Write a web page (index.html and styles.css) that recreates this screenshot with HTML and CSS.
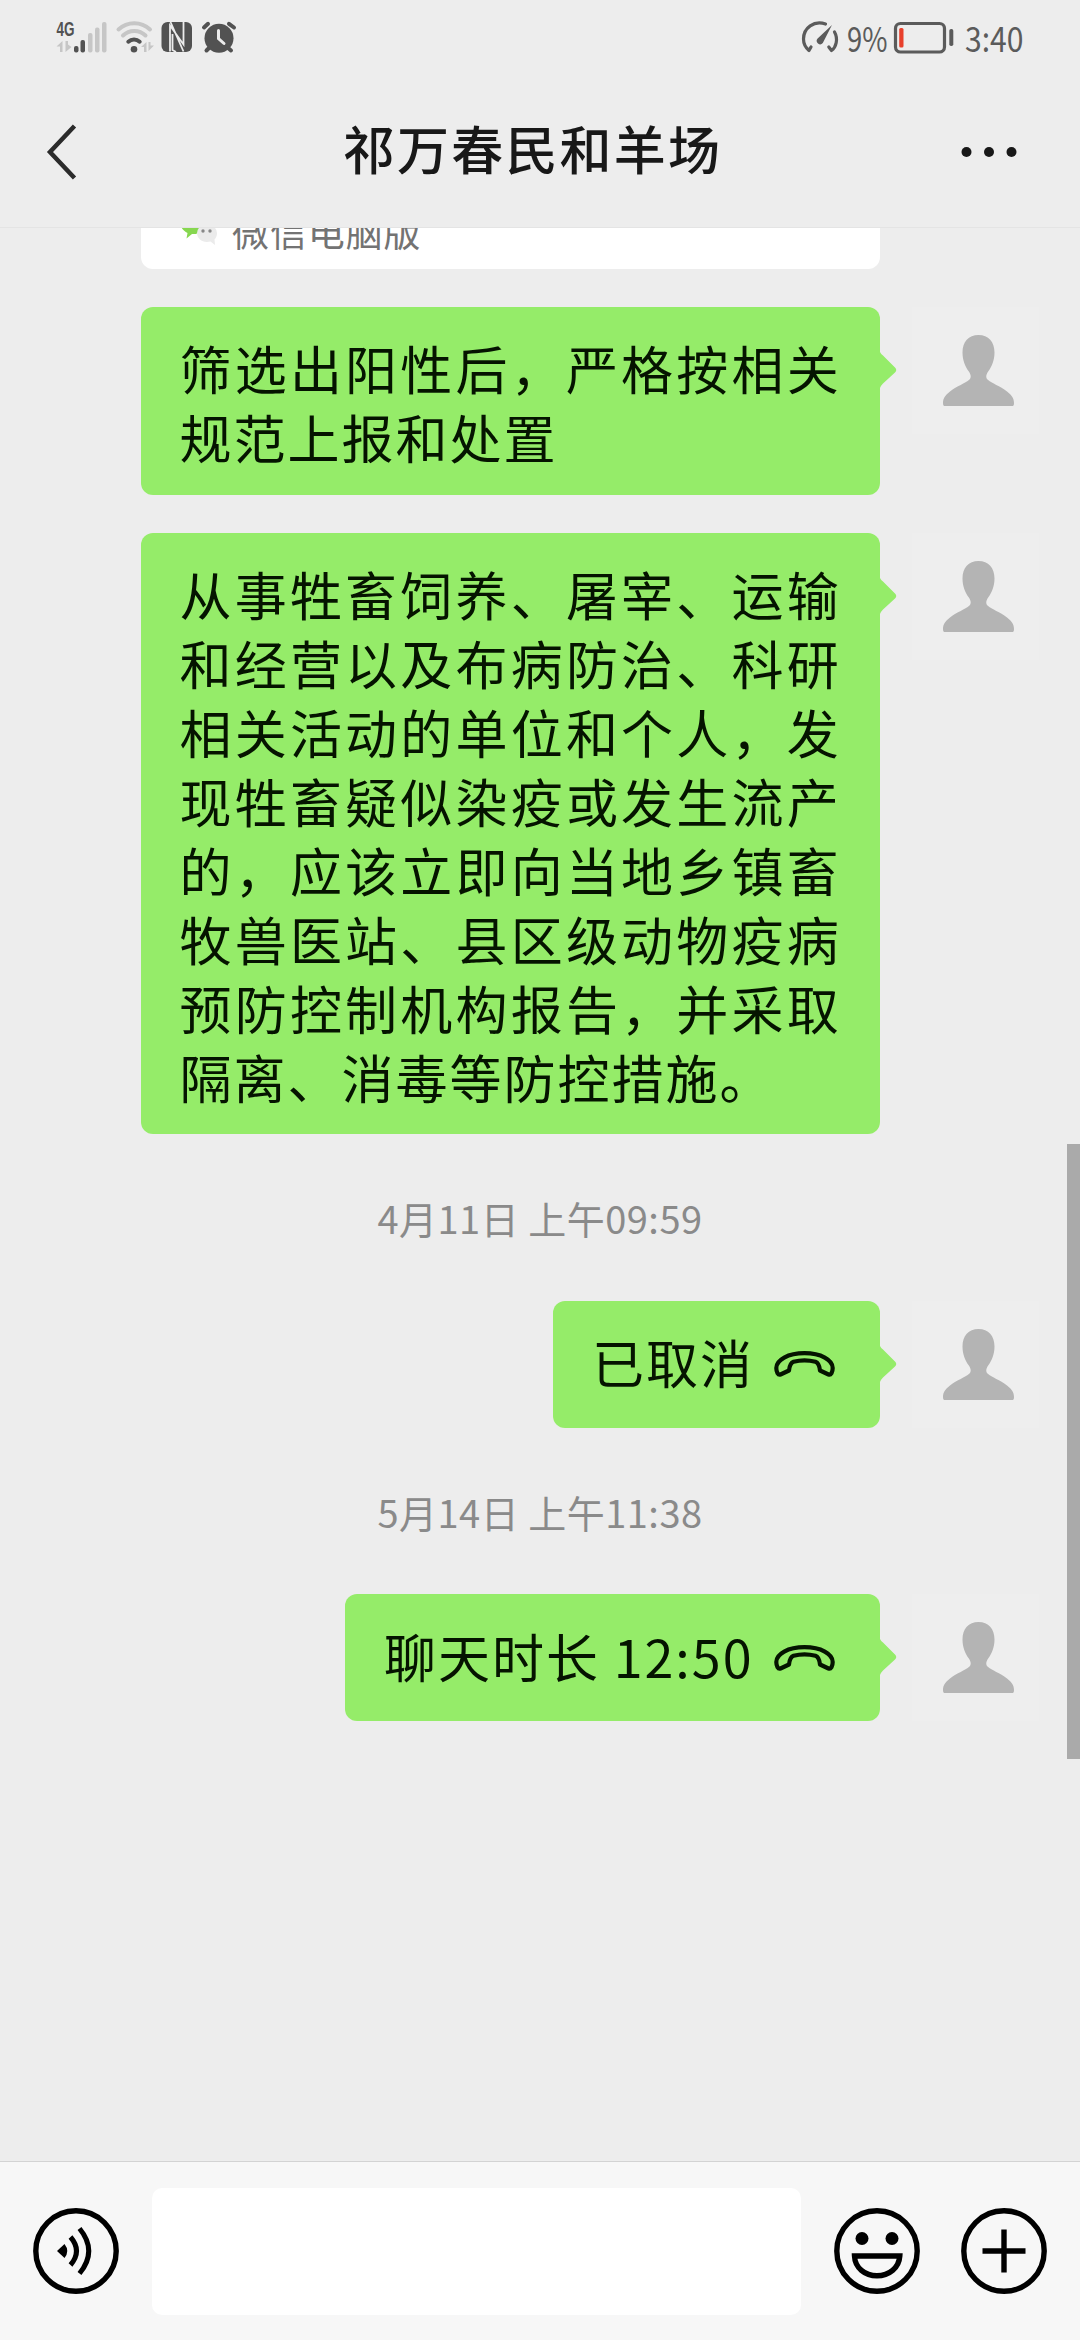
FILE: index.html
```html
<!DOCTYPE html>
<html lang="zh-CN">
<head>
<meta charset="utf-8">
<title>祁万春民和羊场</title>
<link rel="stylesheet" href="styles.css">
</head>
<body>
<svg class="defs" width="0" height="0" aria-hidden="true">
  <symbol id="person" viewBox="0 0 127 127">
    <path fill="#b4b4b4" d="M66.500 28C76.500 28 82.500 35 82.500 45.500C82.500 53.500 79.500 60 76.500 64C74 67.500 73.500 70.500 75.500 72.500C80 76.500 88 79 95 84.500C100 88.500 102 91.500 102 96C102 98.500 101.500 99 99.500 99H33.500C31.500 99 31 98.500 31 96C31 91.500 33 88.500 38 84.500C45 79 53 76.500 57.500 72.500C59.500 70.500 59 67.500 56.500 64C53.500 60 50.500 53.500 50.500 45.500C50.500 35 56.500 28 66.500 28Z"/>
  </symbol>
  <symbol id="call" viewBox="0 0 61 26">
    <path fill="none" stroke="#051400" stroke-width="4.200" stroke-linejoin="round" d="M2.300 17C2.300 9 14 2.200 30.500 2.200S58.700 9 58.700 17C58.700 21 57 24.500 54.500 23.500L46 19.500C45.500 15 43.500 11.500 41.500 10.800C35 9 26 9 19.500 10.800C17.500 11.500 15.500 15 15 19.500L6.500 23.500C4 24.500 2.300 21 2.300 17Z"/>
  </symbol>
  <symbol id="tail" viewBox="0 0 17 36">
    <path fill="#95ec69" d="M0 0Q1 2 3 3.500L15 15.500Q17.500 18 15 20.500L3 31.500Q1 33.500 0 36Z"/>
  </symbol>
</svg>

<header class="top">
  <div class="status">
    <svg width="156" height="40" viewBox="50 16 156 40">
      <text class="net" x="56.500" y="36" textLength="18" lengthAdjust="spacingAndGlyphs">4G</text>
      <g fill="#c6c6c6">
        <rect x="88" y="33" width="4.500" height="19.500" rx="2"/>
        <rect x="95" y="27.500" width="4.500" height="25" rx="2"/>
        <rect x="102" y="22" width="4.500" height="30.500" rx="2"/>
        <path d="M56.500 46.500L62.500 41V52H60V46.500ZM65.500 41H68V44.500L71.500 47L65.500 52ZM141 47L146.500 42V52H144V47ZM148.500 42H150.500V45.500H154L148.500 51Z"/>
      </g>
      <g fill="#525252">
        <rect x="74" y="46" width="4.500" height="6.500" rx="2"/>
        <rect x="80.500" y="40" width="4.500" height="12.500" rx="2"/>
        <circle cx="134" cy="49.200" r="3.300"/>
      </g>
      <g fill="none" stroke-width="4" stroke-linecap="round">
        <path stroke="#c6c6c6" d="M118.500 29.500A23 23 0 0 1 150 29.500M123 35.500A16 16 0 0 1 145.500 35.500"/>
        <path stroke="#525252" d="M128.300 41.700A8.500 8.500 0 0 1 139.700 41.700"/>
      </g>
      <rect x="161.500" y="22" width="30.500" height="30" rx="6" fill="#525252"/>
      <path fill="none" stroke="#ececec" stroke-width="1.800" d="M170 51.500V25.500L183.500 44.500V23M170.500 22L183.500 51.500M172.500 34V50L176 52M183.500 44V22"/>
    </svg>
    <svg class="alarm" width="36" height="34" viewBox="201 20 36 34">
      <g stroke="#525252" stroke-width="4" stroke-linecap="round">
        <path d="M204 27.500L208 23.800M229 23.800L234 27.500M210 47L206.500 50.500M227 47L231 50.500"/>
      </g>
      <circle cx="219" cy="38.300" r="14.500" fill="#525252"/>
      <path d="M218.500 30.500V38.500L224 43.500" fill="none" stroke="#ececec" stroke-width="3" stroke-linecap="round"/>
    </svg>
    <svg class="status-right" width="226" height="60" viewBox="800 6 226 60">
      <g fill="none" stroke="#5b5b5b" stroke-width="3.200" stroke-linecap="round" stroke-linejoin="round">
        <path d="M825.500 24C814 20 803.500 28 803.500 39C803.500 43.500 805.500 47.500 809 50.500L811 47M834.500 32C838.500 39 836 47.500 831.500 50.500L828.800 47"/>
      </g>
      <path fill="#5b5b5b" d="M832 25L822.800 43A3.300 3.300 0 1 1 817.600 38.600Z"/>
      <text class="status-text" x="847" y="51.500" textLength="40.500" lengthAdjust="spacingAndGlyphs">9%</text>
      <rect x="895.500" y="23.500" width="49" height="28.500" rx="5" fill="none" stroke="#5b5b5b" stroke-width="3.200"/>
      <rect x="899.200" y="28" width="4.300" height="19.500" rx="1.500" fill="#e8402c"/>
      <rect x="949.300" y="29" width="4" height="17" rx="1.800" fill="#5b5b5b"/>
      <text class="status-text" x="965" y="51.500" textLength="58.500" lengthAdjust="spacingAndGlyphs">3:40</text>
    </svg>
  </div>
  <nav class="nav">
    <svg width="32" height="58" viewBox="0 0 32 58"><path d="M28.500 3L4 29L28.500 55" fill="none" stroke="#2b2b2b" stroke-width="4.500"/></svg>
    <h1>祁万春民和羊场</h1>
    <svg width="56" height="12" viewBox="0 0 56 12" fill="#181818"><circle cx="5.500" cy="6" r="5"/><circle cx="28" cy="6" r="5"/><circle cx="50.500" cy="6" r="5"/></svg>
  </nav>
</header>

<main class="chat">
  <div class="card">
    <svg width="40" height="36" viewBox="179 210 40 36">
      <path fill="#87d750" d="M180 222A13 11 0 0 1 206 222C206 227 201 231 196 234H192L186.500 238.500L187.500 233C183 230.500 180 227 180 222Z"/>
      <path fill="#ebebeb" d="M197 233A10 8.500 0 0 1 217 233C217 236 216 238 214.500 239.500L215 245L210.500 241.500C203 243.500 197 239 197 233Z"/>
      <circle cx="203" cy="231" r="1.700" fill="#888"/><circle cx="210" cy="231" r="1.700" fill="#888"/>
    </svg>
    <span>微信电脑版</span>
  </div>

  <div class="row">
    <div class="bubble long">
      <div class="line full">筛选出阳性后，严格按相关</div>
      <div class="line">规范上报和处置</div>
      <svg class="tail"><use href="#tail"/></svg>
    </div>
    <svg class="avatar"><use href="#person"/></svg>
  </div>

  <div class="row">
    <div class="bubble long">
      <div class="line full">从事牲畜饲养、屠宰、运输</div>
      <div class="line full">和经营以及布病防治、科研</div>
      <div class="line full">相关活动的单位和个人，发</div>
      <div class="line full">现牲畜疑似染疫或发生流产</div>
      <div class="line full">的，应该立即向当地乡镇畜</div>
      <div class="line full">牧兽医站、县区级动物疫病</div>
      <div class="line full">预防控制机构报告，并采取</div>
      <div class="line">隔离、消毒等防控措施。</div>
      <svg class="tail"><use href="#tail"/></svg>
    </div>
    <svg class="avatar"><use href="#person"/></svg>
  </div>

  <time class="time">4月11日 上午09:59</time>

  <div class="row call-row">
    <div class="bubble call cancelled">
      <span>已取消</span>
      <svg class="call-icon"><use href="#call"/></svg>
      <svg class="tail"><use href="#tail"/></svg>
    </div>
    <svg class="avatar"><use href="#person"/></svg>
  </div>

  <time class="time">5月14日 上午11:38</time>

  <div class="row call-row">
    <div class="bubble call duration">
      <span>聊天时长 12:50</span>
      <svg class="call-icon"><use href="#call"/></svg>
      <svg class="tail"><use href="#tail"/></svg>
    </div>
    <svg class="avatar"><use href="#person"/></svg>
  </div>
  <div class="scrollbar"></div>
</main>

<footer class="composer">
  <svg width="86" height="86" viewBox="-43 -43 86 86">
    <circle r="40.200" fill="none" stroke="#000" stroke-width="5.400"/>
    <path d="M-19 0L-11.500 -7Q-6 0 -11.500 7Z"/>
    <path fill="none" stroke="#000" stroke-width="5" d="M-5.500 -14Q6.500 0 -5.500 14M3.500 -22.500Q22 0 3.500 22.500"/>
  </svg>
  <div class="input"></div>
  <svg width="86" height="86" viewBox="-43 -43 86 86">
    <circle r="40.200" fill="none" stroke="#000" stroke-width="5.400"/>
    <circle cx="-15" cy="-12.500" r="6.500"/><circle cx="15" cy="-12.500" r="6.500"/>
    <path fill="none" stroke="#000" stroke-width="5.400" d="M-22.500 5H22.800C22 17 12 24.800 0 24.800S-22 17 -22.500 5Z"/>
  </svg>
  <svg class="plus" width="86" height="86" viewBox="-43 -43 86 86">
    <circle r="40.200" fill="none" stroke="#000" stroke-width="5.400"/>
    <path stroke="#000" stroke-width="5.400" d="M-21.500 0H21.500M0 -21.500V21.500"/>
  </svg>
</footer>
</body>
</html>
```
FILE: styles.css
```css
* { box-sizing: border-box; }

body {
  margin: 0;
  width: 1080px;
  height: 2340px;
  display: flex;
  flex-direction: column;
  overflow: hidden;
  background: #ededed;
  color: #051400;
  font-family: "Noto Sans CJK SC", sans-serif;
}

svg { display: block; flex: none; }
.defs { position: absolute; }

.top {
  height: 228px;
  flex: none;
  border-bottom: 1px solid #e4e4e4;
}

.status {
  height: 76px;
  padding: 16px 54px 0 50px;
  display: flex;
}
.alarm { margin: 4px 0 0 -5px; }
.status-right { margin: -10px 0 0 auto; }
.net {
  font: bold 20px "Liberation Sans", sans-serif;
  fill: #525252;
}
.status-text {
  font: 34.500px "Noto Sans CJK SC", sans-serif;
  fill: #5b5b5b;
}

.nav {
  height: 151px;
  padding: 0 63px 0 46px;
  display: flex;
  align-items: center;
  justify-content: space-between;
}
.nav h1 {
  margin: 0 0 0 26px;
  padding-bottom: 7px;
  font-size: 52px;
  font-weight: 500;
  line-height: 76px;
  letter-spacing: 2.200px;
  color: #181818;
}

.chat {
  position: relative;
  flex: 1;
  min-height: 0;
  overflow: hidden;
}

.card {
  width: 739px;
  height: 100px;
  margin: -59px 0 38px 141px;
  padding: 41px 38px 0;
  display: flex;
  gap: 13px;
  background: #fff;
  border-radius: 12px;
}
.card span {
  padding-top: 3px;
  font-size: 37px;
  line-height: 36px;
  letter-spacing: 0.900px;
  color: #737373;
}

.row {
  display: flex;
  justify-content: flex-end;
  align-items: flex-start;
  gap: 32px;
  margin-bottom: 38px;
  padding-right: 41px;
}
.row:has(+ .time), .call-row { margin-bottom: 0; }

.bubble {
  position: relative;
  background: #95ec69;
  border-radius: 12px;
  font-size: 52px;
  line-height: 69px;
  letter-spacing: 2px;
  white-space: nowrap;
}
.long {
  width: 739px;
  padding: 26px 0 23px 38.500px;
}
.row:nth-child(2) .long { padding-bottom: 24px; }
.full { letter-spacing: 3.200px; }

.tail {
  position: absolute;
  left: 100%;
  top: 45px;
  margin-left: -0.500px;
  width: 17px;
  height: 36px;
}

.avatar {
  width: 127px;
  height: 127px;
  background: #eee;
}

.call {
  height: 127px;
  padding: 0 45px 0 39px;
  display: flex;
  align-items: center;
  justify-content: space-between;
}
.call span { padding-bottom: 5px; }
.cancelled { width: 327px; }
.duration { width: 535px; }
.call-icon { width: 61px; height: 26px; }

.time {
  display: block;
  height: 166.500px;
  line-height: 168.500px;
  text-align: center;
  font-size: 38px;
  letter-spacing: 0.500px;
  color: #8a8a8a;
}

.scrollbar {
  position: absolute;
  right: 0;
  top: 916px;
  width: 13px;
  height: 615px;
  background: #aaa;
}

.composer {
  height: 179px;
  flex: none;
  display: flex;
  align-items: center;
  padding: 0 33px;
  border-top: 1.500px solid #d3d3d3;
  background: #f7f7f7;
}
.input {
  width: 649px;
  height: 127px;
  margin: 0 33px;
  border-radius: 10px;
  background: #fff;
}
.plus { margin-left: 41px; }
```
